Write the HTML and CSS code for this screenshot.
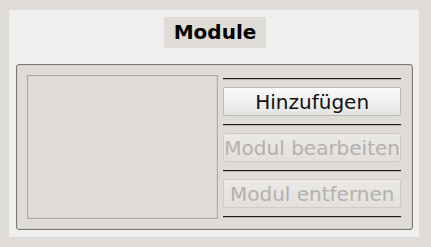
FILE: index.html
```html
<!DOCTYPE html>
<html lang="de">
<head>
<meta charset="utf-8">
<title>Module</title>
<link rel="stylesheet" href="styles.css">
</head>
<body>
<div class="panel">
  <div class="title-row"><span class="title">Module</span></div>
  <div class="group">
    <div class="list"></div>
    <div class="actions">
      <div class="sep"></div>
      <button class="btn">Hinzufügen</button>
      <div class="sep"></div>
      <button class="btn" disabled>Modul bearbeiten</button>
      <div class="sep"></div>
      <button class="btn" disabled>Modul entfernen</button>
      <div class="sep"></div>
    </div>
  </div>
</div>
</body>
</html>
```
FILE: styles.css
```css
html, body {
  margin: 0;
  padding: 0;
}
body {
  background: #dfdbd7;
  width: 431px;
  height: 247px;
  overflow: hidden;
  font-family: "DejaVu Sans", sans-serif;
  padding: 10px 12px 10px 9px;
  box-sizing: border-box;
}
.panel {
  background: #efefef;
  height: 227px;
  box-sizing: border-box;
  padding: 7px 6px 7px 7px;
  display: flex;
  flex-direction: column;
}
.title-row {
  display: flex;
  justify-content: center;
  padding-left: 1px;
}
.title {
  background: #dfdbd7;
  font-weight: bold;
  font-size: 20px;
  line-height: 31px;
  height: 31px;
  padding: 0 10px;
  color: #000;
}
.group {
  margin-top: 16px;
  flex: 1;
  background: #dfdbd7;
  border: 1px solid #7a7876;
  border-radius: 3px;
  box-shadow: inset 0 0 0 1px #d2cecb;
  display: flex;
  padding: 10px 11px 10px 10px;
}
.list {
  width: 190px;
  border: 1px solid #aeaaa6;
  box-shadow: inset 0 0 0 1px #d6d2ce;
  background: #dfdbd7;
}
.actions {
  margin-left: 5px;
  flex: 1;
  display: flex;
  flex-direction: column;
  padding-top: 3px;
}
.sep {
  height: 1px;
  background: #1a1a1a;
  border-bottom: 1px solid #b8b4b0;
}
.btn {
  font-family: "DejaVu Sans", sans-serif;
  font-size: 20px;
  height: 29px;
  margin: 7px 0 8px;
  padding: 0;
  border: 1px solid #bdb9b5;
  border-radius: 2px;
  background: linear-gradient(#fbfbfb, #e4e4e4);
  color: #111;
  white-space: nowrap;
  overflow: hidden;
}
.btn:disabled {
  background: linear-gradient(#ebe9e7, #e2dfdc);
  border-color: #cfcbc7;
  color: #b4b0ac;
}
```
